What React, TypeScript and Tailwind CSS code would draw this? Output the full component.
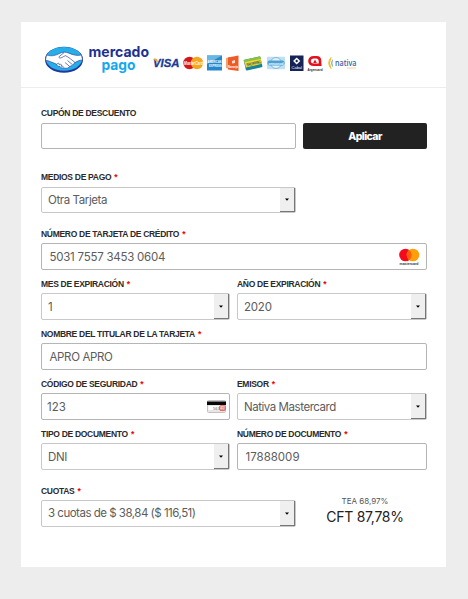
import type { ReactNode } from "react";

function Label({ text, required = true, className = "" }: { text: string; required?: boolean; className?: string }) {
  return (
    <label className={`block h-[18px] whitespace-nowrap font-['Liberation_Sans',Arial,sans-serif] text-[8.5px] leading-[18px] font-bold tracking-[-0.3px] text-[#2b2b2b] ${className}`}>
      {text}
      {required && <span className="ml-px text-[#f00000]"> *</span>}
    </label>
  );
}

function Input({ children, className = "" }: { children?: ReactNode; className?: string }) {
  return (
    <div className={`flex h-[27px] items-center rounded-[2px] border border-[#b5b5b5] bg-white pl-[7.5px] whitespace-nowrap text-[#5c5c5c] ${className}`}>
      {children}
    </div>
  );
}

function Select({ value, textClass = "", className = "h-[27px]" }: { value: string; textClass?: string; className?: string }) {
  return (
    <div className={`flex rounded-[2px] border border-[#c8c8c8] bg-white pl-1.5 whitespace-nowrap text-[#5c5c5c] ${className}`}>
      <span className={`flex flex-1 items-center ${textClass}`}>{value}</span>
      <span className="flex w-[15px] items-center justify-center border-r border-b border-[#777] bg-[#efefef]">
        <svg width="4" height="3" viewBox="0 0 4 3"><path d="M0 .5h4L2 2.7z" fill="#000" /></svg>
      </span>
    </div>
  );
}

function MercadoPagoLogo() {
  return (
    <svg width="108" height="32" viewBox="0 0 108 32" className="overflow-visible">
      <ellipse cx="20" cy="15.700" rx="19" ry="13" fill="#22399a" />
      <ellipse cx="20" cy="14.800" rx="18.2" ry="11.9" fill="#25aee8" />
      <g transform="translate(0 1)">
        <path d="M2.5 10C8 11.8 12 10.2 15.5 8.5c3-1.8 6.500-1.700 9.500-.3 4 1.800 8 2.800 12.500 1.800l1 5c-3 .2-5 1-7.500 2.500-2 1.500-3 3.700-5.500 4-1.500 2.200-3.500 2-5 1.500-2 .8-3.500-.2-4.500-1.500-2.200 0-3-1-3.300-2.300C8 17.500 5 15.500 1.500 15.300z" fill="#fff" stroke="#22399a" strokeWidth=".6" />
        <path d="M20 7.700l-5 4c-.7 1.800 2.500 1.700 4.200 0l2.300-1c3 1.300 7 4.700 9.700 7M12.700 19.300c1.500-2 3-.8 2.500.5 1.700-1.300 3 0 2 1.500 1.500-.7 2.500.3 2 1.500M21 17.500l4.500 3.800M23.500 15.500l4.500 3.800" fill="none" stroke="#22399a" strokeWidth=".65" />
      </g>
      <g fontFamily="Inter, sans-serif" fontWeight="700" fontSize="14.500">
        <text x="44.500" y="13" textLength="60.500" lengthAdjust="spacingAndGlyphs" fill="#203191">mercado</text>
        <text x="57.500" y="26.300" textLength="34" lengthAdjust="spacingAndGlyphs" fill="#16a8ee">pago</text>
      </g>
    </svg>
  );
}

function CardBrands() {
  return (
    <svg width="205" height="20" viewBox="0 0 205 20" fontFamily="Liberation Sans, sans-serif" className="overflow-visible">
      <text x="1" y="14" fontSize="11.500" fontWeight="bold" fontStyle="italic" textLength="26.500" lengthAdjust="spacingAndGlyphs" fill="#1b3a98" stroke="#1b3a98" strokeWidth=".3">VISA</text>
      <path d="M1 6h4l1.500 4z" fill="#f3a72a" />
      <circle cx="37.500" cy="10" r="6.200" fill="#d7141b" /><circle cx="45" cy="10" r="6.200" fill="#f6a51c" />
      <text x="32" y="12" fontSize="4.500" fontWeight="bold" fontStyle="italic" textLength="19" lengthAdjust="spacingAndGlyphs" fill="#fff">MasterCard</text>
      <rect x="55" y="2.500" width="15" height="15" fill="#2687cd" />
      <path d="M55 2.500h15L55 11z" fill="#69b8e4" />
      <text x="55.500" y="9.500" fontSize="4" fontWeight="bold" textLength="14" lengthAdjust="spacingAndGlyphs" fill="#fff">AMERICAN</text>
      <text x="57" y="14" fontSize="4" fontWeight="bold" textLength="12.500" lengthAdjust="spacingAndGlyphs" fill="#fff">EXPRESS</text>
      <path d="M74 5l4-1v12l-4-1z" fill="#f3a06f" /><path d="M76 4.500l10.500-2v15.500L76 16.500z" fill="#ef5b25" />
      <path d="M80 8l3-1v3l-3 .5z" fill="#fff" opacity=".8" />
      <text x="76" y="14.500" fontSize="3.600" fontWeight="bold" textLength="10" lengthAdjust="spacingAndGlyphs" fill="#fff">Naranja</text>
      <g transform="rotate(-13 101 10)">
        <rect x="92.500" y="5" width="17" height="11" rx="1" fill="#16839b" /><rect x="92.500" y="5" width="17" height="3" fill="#8ac044" /><rect x="93" y="7.500" width="16.500" height="5.300" fill="#f6dc22" />
        <text x="94" y="12" fontSize="4.500" fontWeight="bold" textLength="15" lengthAdjust="spacingAndGlyphs" fill="#155a75">SHOPPING</text>
      </g>
      <rect x="115" y="3.700" width="18" height="12.600" rx="1" fill="#bfe0f3" />
      <circle cx="124" cy="10" r="5.500" fill="#dff1fb" stroke="#77b9e1" />
      <rect x="115.500" y="7.500" width="17" height="5" rx="2" fill="#4f9fd4" />
      <text x="116.500" y="11.600" fontSize="4.300" fontWeight="bold" textLength="15" lengthAdjust="spacingAndGlyphs" fill="#fff">cencosud</text>
      <rect x="138" y="2.500" width="13.500" height="15.500" fill="#142456" />
      <path d="M144.700 4.500l3.600 3.500-3.600 3.500-3.600-3.500z" fill="#fff" /><path d="M144.700 6.600l1.500 1.400-1.500 1.400-1.500-1.400z" fill="#142456" />
      <text x="139.500" y="15.800" fontSize="4" textLength="10.500" lengthAdjust="spacingAndGlyphs" fill="#fff">Cabal</text>
      <path d="M169.500 11.800H162q-4.500 0-4.500-3.800T162 4.200h2.500q3.500 0 3.500 3.800v3.800" fill="none" stroke="#e5101d" strokeWidth="2.600" />
      <path d="M163 6.600l1.800 3.400h-3.600z" fill="#e5101d" />
      <text x="155.500" y="17.500" fontSize="4" fontWeight="bold" textLength="15" lengthAdjust="spacingAndGlyphs" fill="#332528">Argencard</text>
      <path d="M179 4.500q-4.500 5.500 0 11-3-5.500 0-11" fill="#f2be24" stroke="#f2be24" />
      <path d="M180.700 6q-2.500 4 0 8.500-1-4.500 0-8.500" fill="#275da9" />
      <text x="183" y="12.500" fontFamily="Open Sans, sans-serif" fontSize="8" fontWeight="600" textLength="21.500" lengthAdjust="spacingAndGlyphs" fill="#3564a8">nativa</text>
      <path d="M195 15h9" stroke="#f4d48a" strokeWidth="1" />
    </svg>
  );
}

function MastercardIcon() {
  return (
    <svg width="22" height="19" viewBox="0 0 22 19" className="mr-[6px] ml-auto overflow-visible">
      <circle cx="7.500" cy="8" r="6.300" fill="#f50a1c" /><circle cx="15" cy="8" r="6.300" fill="#ff9f0a" />
      <path d="M11.250 3a6.300 6.300 0 0 1 0 10 6.300 6.300 0 0 1 0-10" fill="#ff5d08" />
      <text x="1.500" y="17.800" fontFamily="Liberation Sans, sans-serif" fontSize="3.800" fontWeight="bold" textLength="19" lengthAdjust="spacingAndGlyphs" fill="#333">mastercard</text>
    </svg>
  );
}

function SecurityCodeIcon() {
  return (
    <svg width="20" height="13" viewBox="0 0 20 13" className="mr-[2px] ml-auto">
      <rect x=".5" y=".5" width="18" height="12" rx="1" fill="#e6e6e6" stroke="#c2c2c2" />
      <rect x="0" y="1.500" width="19" height="3.500" fill="#070707" />
      <rect x="1.500" y="6" width="10.500" height="4" fill="#fff" />
      <text x="6" y="9.500" fontSize="4" fontFamily="Liberation Sans, sans-serif" fill="#555">567</text>
      <rect x="12.500" y="5.700" width="6" height="4.800" rx="1.500" fill="#f6d2cd" stroke="#df675e" />
      <text x="13" y="9.500" fontSize="3" fontFamily="Liberation Sans, sans-serif" fill="#b33">123</text>
    </svg>
  );
}

export default function App() {
  return (
    <main className="h-[599px] w-[468px] bg-[#ededed] pt-[22px] pl-[21px] font-[Inter,sans-serif] text-[11.5px]">
      <section className="h-[545px] w-[425px] bg-white">
        <header className="flex h-[66px] border-b border-[#ececec] pt-[22px] pl-[23px]">
          <MercadoPagoLogo />
          <div className="pt-[9px]"><CardBrands /></div>
        </header>
        <form className="ml-5 w-[386px] pt-[16px]">
          <Label text="CUPÓN DE DESCUENTO" required={false} className="mb-px" />
          <div className="flex gap-[7px]">
            <Input className="h-[26px]! w-[255px]" />
            <button type="button" className="h-[26px] w-[124px] rounded-[2px] bg-[#222] pt-px text-[10.5px] font-extrabold tracking-[-0.6px] text-white">Aplicar</button>
          </div>
          <Label text="MEDIOS DE PAGO" className="mt-[19px] mb-px" />
          <Select value="Otra Tarjeta" textClass="pt-[2px] tracking-[-0.4px]" className="h-[26px] w-[255px]" />
          <Label text="NÚMERO DE TARJETA DE CRÉDITO" className="mt-[12px]" />
          <Input><span className="pt-[2px] tracking-[-0.25px]">5031 7557 3453 0604</span><MastercardIcon /></Input>
          <div className="mt-[5px] grid grid-cols-[189px_190px] gap-x-[7px]">
            <div><Label text="MES DE EXPIRACIÓN" /><Select value="1" textClass="pt-[2px]" /></div>
            <div><Label text="AÑO DE EXPIRACIÓN" /><Select value="2020" textClass="pt-[2px] tracking-[-0.2px]" /></div>
          </div>
          <Label text="NOMBRE DEL TITULAR DE LA TARJETA" className="mt-[5px]" />
          <Input className="pt-[2px] tracking-[-0.35px]">APRO APRO</Input>
          <div className="mt-[5px] grid grid-cols-[189px_190px] gap-x-[7px] gap-y-[5px]">
            <div><Label text="CÓDIGO DE SEGURIDAD" /><Input className="pl-[5px]!"><span className="pt-[2px]">123</span><SecurityCodeIcon /></Input></div>
            <div><Label text="EMISOR" /><Select value="Nativa Mastercard" textClass="pt-[2px] tracking-[-0.45px]" /></div>
            <div><Label text="TIPO DE DOCUMENTO" /><Select value="DNI" textClass="pt-[2px] tracking-[-0.4px]" /></div>
            <div><Label text="NÚMERO DE DOCUMENTO" /><Input className="pt-[2px]">17888009</Input></div>
          </div>
          <div className="mt-[12px] flex">
            <div className="w-[255px] shrink-0"><Label text="CUOTAS" /><Select value="3 cuotas de $ 38,84 ($ 116,51)" textClass="tracking-[-0.5px]" /></div>
            <div className="w-[138px] shrink-0 pt-[13px] text-center text-[#222]">
              <p className="text-[8px] leading-3 text-[#555]">TEA 68,97%</p>
              <p className="text-[14px] leading-5 tracking-[-0.3px]">CFT 87,78%</p>
            </div>
          </div>
        </form>
      </section>
    </main>
  );
}
